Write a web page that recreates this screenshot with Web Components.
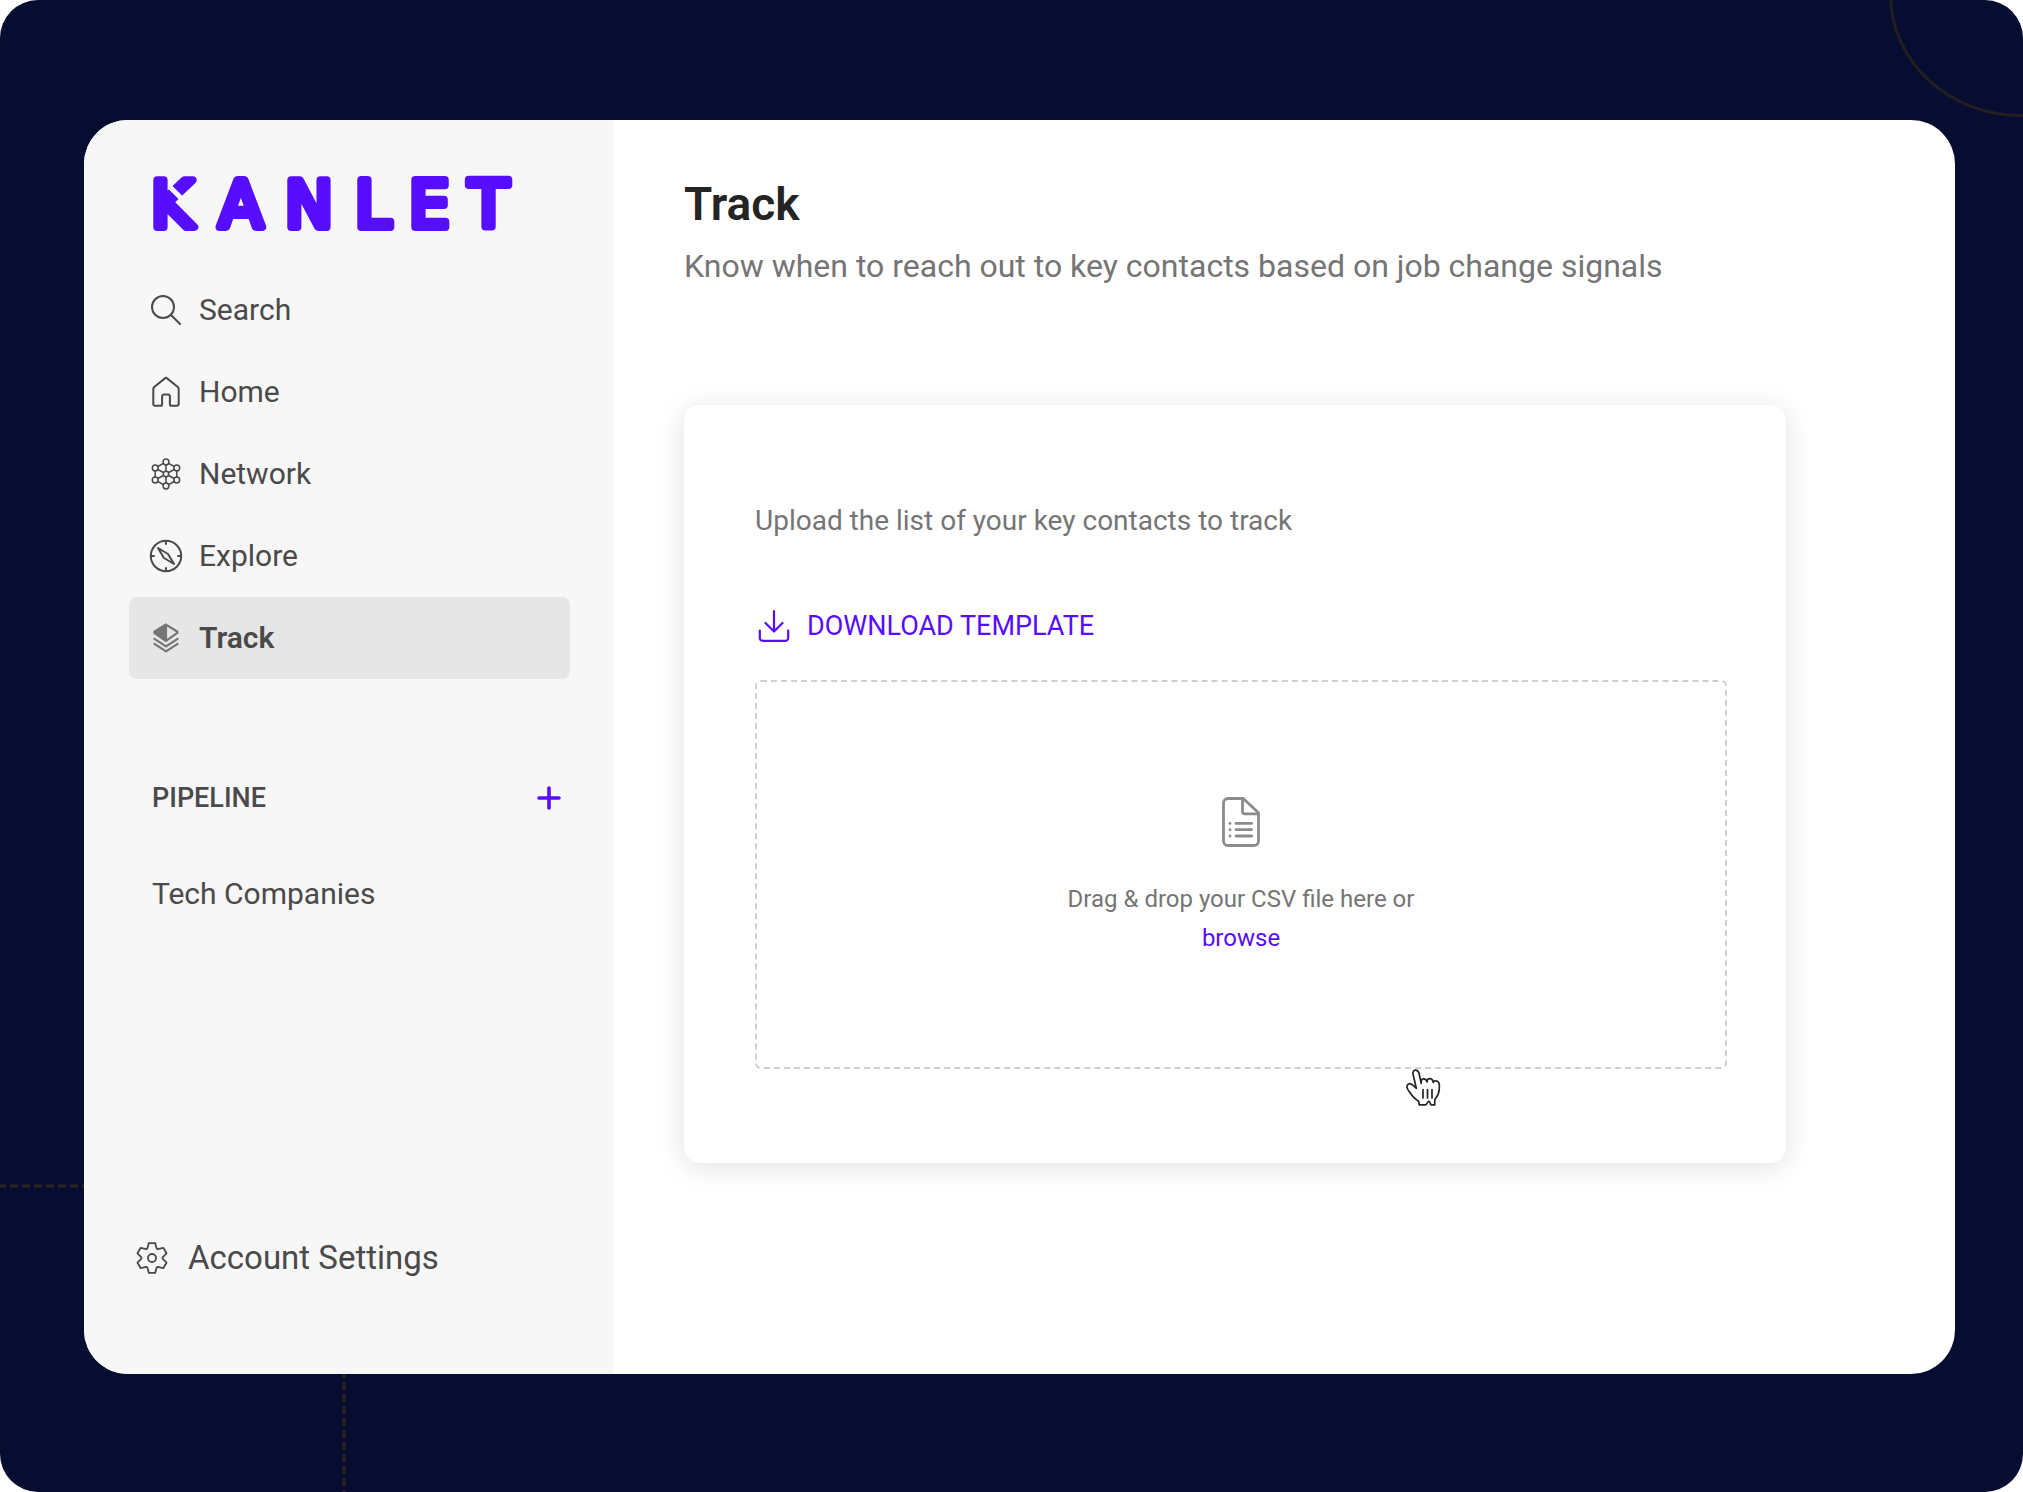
<!DOCTYPE html>
<html lang="en">
<head>
<meta charset="utf-8">
<meta name="viewport" content="width=device-width, initial-scale=1">
<title>Kanlet - Track</title>
<style>
  :root {
    --navy: #070d31;
    --brand: #570dff;
    --ink: #242424;
    --text: #4a4a4a;
    --muted: #757575;
    --sidebar: #f7f7f7;
  }

  body {
    background: white;
    color: var(--text);
    font-family: Roboto, "Liberation Sans", sans-serif;
    margin: 0;
  }
</style>
</head>
<body>
<app-shell>
  <side-bar slot="sidebar">
    <nav-item icon="search">Search</nav-item>
    <nav-item icon="home">Home</nav-item>
    <nav-item icon="network">Network</nav-item>
    <nav-item icon="explore">Explore</nav-item>
    <nav-item icon="track" active>Track</nav-item>
    <pipe-line slot="pipeline" title="PIPELINE">Tech Companies</pipe-line>
    <account-link slot="account">Account Settings</account-link>
  </side-bar>
  <page-heading>
    Track
    <span slot="subtitle">Know when to reach out to key contacts based on job change signals</span>
  </page-heading>
  <upload-card>
    Upload the list of your key contacts to track
    <span slot="download">DOWNLOAD TEMPLATE</span>
    <drop-zone slot="zone"></drop-zone>
  </upload-card>
</app-shell>

<script>
// svg bodies, drawn by <app-icon name="...">
const icons = {
  search: {
    box: "0 0 32 32",
    body: `<circle cx="13" cy="13" r="11"/><path d="M21 21l9 9"/>`
  },
  home: {
    box: "0 0 32 32",
    body: `<path d="M3.3 13c0-.8.3-1.4.9-2L14.6 2.6a2 2 0 0 1 2.8 0L27.8 11c.6.6.9 1.2.9 2v15.2a1.6 1.6 0 0 1-1.6 1.6h-5.6a1.6 1.6 0 0 1-1.6-1.6v-7.6a2 2 0 0 0-2-2h-3.8a2 2 0 0 0-2 2v7.6a1.6 1.6 0 0 1-1.6 1.6H4.9a1.6 1.6 0 0 1-1.6-1.6z"/>`
  },
  network: {
    box: "0 0 32 32",
    body: `<g stroke-width="1.5">
      <path d="M16 7v6M16 19v6M13.4 5.4L7.8 8.5M18.6 5.4l5.6 3.1M13.4 26.6l-5.6-3.1M18.6 26.6l5.6-3.1M5.2 13v6M26.8 13v6M7.8 11.5l5.6 3M24.2 11.5l-5.6 3M7.8 20.5l5.6-3M24.2 20.5l-5.6-3"/>
      <circle cx="16" cy="16" r="2.7"/><circle cx="16" cy="4" r="2.9"/><circle cx="16" cy="28" r="2.9"/>
      <circle cx="5.2" cy="10" r="2.9"/><circle cx="26.8" cy="10" r="2.9"/>
      <circle cx="5.2" cy="22" r="2.9"/><circle cx="26.8" cy="22" r="2.9"/></g>`
  },
  explore: {
    box: "0 0 32 32",
    body: `<circle cx="16" cy="16" r="15.2"/>
      <path d="M16 1v3M16 28v3M1 16h3M28 16h3"/>
      <path d="M8 8l10 6 6 10-10-6z"/>`
  },
  track: {
    box: "0 0 32 32",
    body: `<g stroke-width="2.2">
      <path d="M16 2.6l11.4 7.2v1L16 18.8 4.6 10.8v-1z"/>
      <path fill="currentColor" d="M16 2.6v16.2L4.6 10.8v-1z"/>
      <path d="M4.4 16.8L16 24.4l11.6-7.6M4.4 21.8L16 29.4l11.6-7.6"/></g>`
  },
  settings: {
    box: "-16 -16 32 32",
    body: `<g stroke-width="1.8"><path d="M-3.2-14.9h6.4l1.4 5.4 1.3.7 5.4-1.4 3.2 5.5-3.9 4v1.4l3.9 4-3.2 5.5-5.4-1.4-1.3.7-1.4 5.4h-6.4l-1.4-5.4-1.3-.7-5.4 1.4-3.2-5.5 3.9-4V-.7l-3.9-4 3.2-5.5 5.4 1.4 1.3-.7z"/>
      <circle r="4"/></g>`
  },
  plus: {
    box: "0 0 32 32",
    body: `<path stroke-width="3.6" d="M16 6v20M6 16h20"/>`
  },
  download: {
    box: "0 0 32 32",
    body: `<path stroke-width="2.2" d="M16 1v20M7.5 13l8.5 8.5 8.5-8.5M1.8 20.5v7.3a3 3 0 0 0 3 3h22.4a3 3 0 0 0 3-3v-7.3"/>`
  },
  file: {
    box: "0 0 38 50",
    body: `<g stroke-width="2.8">
      <path d="M6 1.5h15.2L36.5 15.8V44a4.5 4.5 0 0 1-4.5 4.5H6A4.5 4.5 0 0 1 1.5 44V6A4.5 4.5 0 0 1 6 1.5z"/>
      <path d="M20.5 2v12.2a2.6 2.6 0 0 0 2.6 2.6H36"/>
      <path d="M14 26.4h15.6M14 32.7h15.6M14 39h15.6M8 26.4h.1M8 32.7h.1M8 39h.1"/></g>`
  },
  hand: {
    box: "0 0 36 37",
    body: `<path fill="white" stroke-width="1.7" d="M10.3 19.3L7.1 5.5C6.5 3 7.6 1.2 9.4 1.1c1.9-.1 3.1 1.2 3.6 3.2l2.2 10.1c-.4-2.6.4-4.3 2.3-4.6 1.9-.2 3.1.9 3.6 3.2-.2-2 .7-3.2 2.5-3.3 1.9-.1 3.3 1.2 3.6 3.8.2-1.2 1.1-1.8 2.6-1.6 2.2.2 3.5 1.8 3.6 4.7.1 3-.3 6.4-1.3 8.8-.9 2.2-3 4-3.3 6-.2 1.5.2 2.9-.1 4.4h-3.600c-.9-1.3-1.3-3.4-2.4-3.4s-1.6 2.8-3 3.4h-6.4c-.6-1.3.1-2.6-1-3.6C9.2 29.8 6.5 27.6 4.7 24.5 3.3 22.3.8 20.5.9 17.5c.1-1.8 1.6-3.1 3.7-2.7 2.2.4 3.9 3.2 5.7 4.5z"/>
      <path stroke-width="1.7" d="M17 20.5v8.5M21.5 20.5v8.5M26 20.5v8.5"/>`
  }
};

class AppIcon extends HTMLElement {
  connectedCallback() {
    const icon = icons[this.getAttribute("name")];
    this.attachShadow({ mode: "open" }).innerHTML = `
      <style>
        :host { display: block; flex: none; height: 32px; width: 32px; }
        svg {
          display: block;
          height: 100%;
          overflow: visible;
          width: 100%;
        }
      </style>
      <svg viewBox="${icon.box}" fill="none" stroke="currentColor" stroke-width="2"
        stroke-linecap="round" stroke-linejoin="round" aria-hidden="true">${icon.body}</svg>
    `;
  }
}

// Dark page with the rounded window on it
class AppShell extends HTMLElement {
  constructor() {
    super();
    this.attachShadow({ mode: "open" }).innerHTML = `
      <style>
        :host {
          background: var(--navy);
          border-radius: 38px;
          box-sizing: border-box;
          display: flex;
          min-height: 100vh;
          overflow: hidden;
          padding: 120px 68px 118px 84px;
          position: relative;
        }
        .ring {
          border: 3px solid #231f20;
          border-radius: 50%;
          height: 238px;
          position: absolute;
          right: -130px;
          top: -127px;
          width: 258px;
        }
        .line {
          fill: none;
          position: absolute;
          stroke: #292622;
          stroke-dasharray: 8 4;
          stroke-width: 3px;
        }
        .across { bottom: 304px; height: 4px; left: 0; width: 84px; }
        .down { bottom: 0; height: 118px; left: 342px; width: 4px; }
        .window {
          background: white;
          border-radius: 44px;
          display: grid;
          flex: 1;
          grid-template-columns: 529px 1fr;
          overflow: hidden;
        }
        main { padding: 60px 169px 60px 71px; }
      </style>
      <div class="ring"></div>
      <svg class="line across"><path d="M-2 2h86"/></svg>
      <svg class="line down"><path d="M2 -4v122"/></svg>
      <div class="window">
        <slot name="sidebar"></slot>
        <main><slot></slot></main>
      </div>
    `;
  }
}

class SideBar extends HTMLElement {
  constructor() {
    super();
    this.attachShadow({ mode: "open" }).innerHTML = `
      <style>
        :host {
          background: var(--sidebar);
          box-sizing: border-box;
          display: flex;
          flex-direction: column;
          padding: 43px 43px 84px 45px;
        }
        brand-logo { margin: 0 0 18px 16px; }
        nav { display: flex; flex-direction: column; }
        .account { margin-top: auto; }
      </style>
      <brand-logo></brand-logo>
      <nav><slot></slot></nav>
      <slot name="pipeline"></slot>
      <div class="account"><slot name="account"></slot></div>
    `;
  }
}

// Wordmark with round stroke ends and a notch in the arm of the K
class BrandLogo extends HTMLElement {
  constructor() {
    super();
    this.attachShadow({ mode: "open" }).innerHTML = `
      <style>
        :host { display: block; }
        svg { display: block; height: 88px; width: 384px; }
        text {
          fill: var(--brand);
          font: 400 64px "DejaVu Sans", sans-serif;
          stroke: var(--brand);
          stroke-linejoin: round;
          stroke-width: 8px;
        }
        line { stroke: var(--sidebar); stroke-width: 5px; }
      </style>
      <svg viewBox="0 0 384 88" role="img" aria-label="Kanlet">
        <text x="6 74 140 210 264 324" y="64">KANLET</text>
        <line x1="25" y1="24" x2="37" y2="36"/>
      </svg>
    `;
  }
}

class NavItem extends HTMLElement {
  constructor() {
    super();
    this.attachShadow({ mode: "open" }).innerHTML = `
      <style>
        :host { display: block; }
        a {
          align-items: center;
          border-radius: 8px;
          color: var(--text);
          display: flex;
          font-size: 30px;
          gap: 17px;
          height: 82px;
          line-height: 36px;
          padding: 0 21px;
          text-decoration: none;
        }
        :host([active]) a { background: #e6e6e6; font-weight: 600; }
        :host([active]) app-icon { color: var(--muted); }
      </style>
      <a href="#"><app-icon name="${this.getAttribute("icon")}"></app-icon><span><slot></slot></span></a>
    `;
  }
}

class PipeLine extends HTMLElement {
  constructor() {
    super();
    this.attachShadow({ mode: "open" }).innerHTML = `
      <style>
        :host { display: block; padding: 103px 5px 0 23px; }
        header { align-items: center; display: flex; justify-content: space-between; }
        h2 { font-size: 27px; font-weight: 500; line-height: 32px; margin: 0; }
        button {
          background: none;
          border: none;
          color: var(--brand);
          cursor: pointer;
          padding: 0;
        }
        a {
          color: var(--text);
          display: block;
          font-size: 30px;
          line-height: 36px;
          margin-top: 62px;
          text-decoration: none;
        }
      </style>
      <header>
        <h2>${this.getAttribute("title")}</h2>
        <button aria-label="Add pipeline"><app-icon name="plus"></app-icon></button>
      </header>
      <a href="#"><slot></slot></a>
    `;
  }
}

class AccountLink extends HTMLElement {
  constructor() {
    super();
    this.attachShadow({ mode: "open" }).innerHTML = `
      <style>
        :host { display: block; }
        a {
          align-items: center;
          color: var(--text);
          display: flex;
          font-size: 33px;
          gap: 20px;
          line-height: 64px;
          padding-left: 7px;
          text-decoration: none;
        }
      </style>
      <a href="#"><app-icon name="settings"></app-icon><span><slot></slot></span></a>
    `;
  }
}

class PageHeading extends HTMLElement {
  constructor() {
    super();
    this.attachShadow({ mode: "open" }).innerHTML = `
      <style>
        :host { display: block; }
        h1 { color: var(--ink); font-size: 46px; font-weight: 600; line-height: 48px; margin: 0; }
        p { color: var(--muted); font-size: 32px; line-height: 36px; margin: 20px 0 0; }
      </style>
      <h1><slot></slot></h1>
      <p><slot name="subtitle"></slot></p>
    `;
  }
}

class UploadCard extends HTMLElement {
  constructor() {
    super();
    this.attachShadow({ mode: "open" }).innerHTML = `
      <style>
        :host {
          border-radius: 16px;
          box-shadow: 0 4px 28px rgb(0, 0, 0, 0.12);
          color: var(--muted);
          display: block;
          margin-top: 121px;
          padding: 98px 59px 94px 71px;
        }
        p { font-size: 28px; line-height: 36px; margin: 0; }
        a {
          align-items: center;
          color: var(--brand);
          display: inline-flex;
          font-size: 27px;
          gap: 17px;
          line-height: 36px;
          margin: 69px 0 36px 3px;
          text-decoration: none;
          vertical-align: top;
        }
      </style>
      <p><slot></slot></p>
      <a href="#"><app-icon name="download"></app-icon><span><slot name="download"></slot></span></a>
      <slot name="zone"></slot>
    `;
  }
}

class DropZone extends HTMLElement {
  constructor() {
    super();
    this.attachShadow({ mode: "open" }).innerHTML = `
      <style>
        :host {
          align-items: center;
          border: 2px dashed #cfcfcf;
          border-radius: 6px;
          display: flex;
          flex-direction: column;
          font-size: 24px;
          line-height: 39px;
          padding: 115px 0 109px;
          position: relative;
        }
        .file { color: #8c8c8c; height: 50px; margin-bottom: 33px; width: 38px; }
        button {
          background: none;
          border: none;
          color: var(--brand);
          cursor: pointer;
          font: inherit;
          padding: 0;
        }
        .hand {
          bottom: -39px;
          color: var(--ink);
          height: 37px;
          position: absolute;
          right: 283px;
          width: 36px;
        }
      </style>
      <app-icon class="file" name="file"></app-icon>
      <span>Drag &amp; drop your CSV file here or</span>
      <button>browse</button>
      <app-icon class="hand" name="hand"></app-icon>
    `;
  }
}

customElements.define("app-icon", AppIcon);
customElements.define("brand-logo", BrandLogo);
customElements.define("app-shell", AppShell);
customElements.define("side-bar", SideBar);
customElements.define("nav-item", NavItem);
customElements.define("pipe-line", PipeLine);
customElements.define("account-link", AccountLink);
customElements.define("page-heading", PageHeading);
customElements.define("upload-card", UploadCard);
customElements.define("drop-zone", DropZone);
</script>
</body>
</html>
